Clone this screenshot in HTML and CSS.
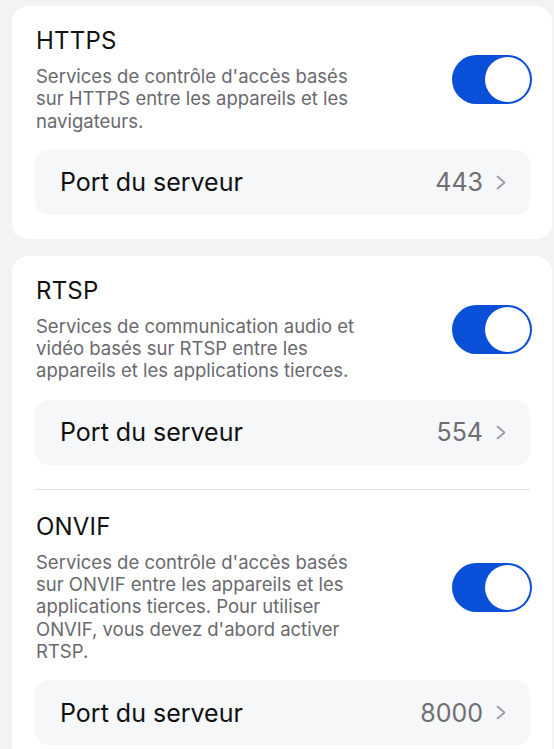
FILE: index.html
```html
<!DOCTYPE html>
<html lang="fr">
<head>
<meta charset="utf-8">
<title>Services</title>
<link rel="stylesheet" href="styles.css">
</head>
<body>
<div class="card">
  <section class="section">
    <div class="header">
      <div class="info">
        <h2 class="title">HTTPS</h2>
        <p class="desc">Services de contrôle d'accès basés sur HTTPS entre les appareils et les navigateurs.</p>
      </div>
      <div class="toggle"><span class="knob"></span></div>
    </div>
    <div class="row">
      <span class="row-label">Port du serveur</span>
      <span class="row-value">443<svg class="chev" width="10" height="15" viewBox="0 0 10 15"><polyline points="1.5,1.5 8.5,7.5 1.5,13.5" fill="none" stroke="#9b9ba0" stroke-width="1.8" stroke-linecap="round" stroke-linejoin="round"/></svg></span>
    </div>
  </section>
</div>
<div class="card">
  <section class="section">
    <div class="header">
      <div class="info">
        <h2 class="title">RTSP</h2>
        <p class="desc">Services de communication audio et vidéo basés sur RTSP entre les appareils et les applications tierces.</p>
      </div>
      <div class="toggle"><span class="knob"></span></div>
    </div>
    <div class="row">
      <span class="row-label">Port du serveur</span>
      <span class="row-value">554<svg class="chev" width="10" height="15" viewBox="0 0 10 15"><polyline points="1.5,1.5 8.5,7.5 1.5,13.5" fill="none" stroke="#9b9ba0" stroke-width="1.8" stroke-linecap="round" stroke-linejoin="round"/></svg></span>
    </div>
  </section>
  <section class="section">
    <div class="header">
      <div class="info">
        <h2 class="title">ONVIF</h2>
        <p class="desc">Services de contrôle d'accès basés sur ONVIF entre les appareils et les applications tierces. Pour utiliser ONVIF, vous devez d'abord activer RTSP.</p>
      </div>
      <div class="toggle"><span class="knob"></span></div>
    </div>
    <div class="row">
      <span class="row-label">Port du serveur</span>
      <span class="row-value">8000<svg class="chev" width="10" height="15" viewBox="0 0 10 15"><polyline points="1.5,1.5 8.5,7.5 1.5,13.5" fill="none" stroke="#9b9ba0" stroke-width="1.8" stroke-linecap="round" stroke-linejoin="round"/></svg></span>
    </div>
  </section>
</div>
</body>
</html>
```
FILE: styles.css
```css
html, body {
  margin: 0;
}
body {
  background: #f2f3f5;
  font-family: Inter, "Noto Sans", sans-serif;
  padding: 6px 0 0 12px;
  overflow: hidden;
}
.card {
  width: 540px;
  box-sizing: border-box;
  background: #ffffff;
  border-radius: 16px;
  padding: 0 22px 0 23px;
  margin-bottom: 17px;
}
.section {
  padding: 21px 0 24px;
}
.section + .section {
  border-top: 1px solid #e3e3e6;
  padding-top: 23px;
}
.header {
  display: flex;
  align-items: center;
  justify-content: space-between;
  padding-left: 1px;
}
.title {
  margin: 0;
  font-size: 24px;
  font-weight: 400;
  line-height: 28px;
  letter-spacing: 0.2px;
  color: #111111;
}
.desc {
  margin: 10px 0 0;
  font-size: 18.5px;
  line-height: 22.3px;
  color: #69696e;
  max-width: 336px;
}
.toggle {
  flex: none;
  width: 80px;
  height: 49px;
  box-sizing: border-box;
  border-radius: 25px;
  background: #0a4fd8;
  display: flex;
  justify-content: flex-end;
  align-items: center;
  padding: 2px;
  margin-right: -2px;
}
.knob {
  width: 45px;
  height: 45px;
  border-radius: 50%;
  background: #ffffff;
}
.row {
  margin-top: 18px;
  height: 65px;
  box-sizing: border-box;
  background: #f6f7f8;
  border-radius: 14px;
  display: flex;
  align-items: center;
  justify-content: space-between;
  padding: 0 24px 0 25px;
}
.row-label {
  font-size: 25px;
  color: #111111;
}
.row-value {
  font-size: 25px;
  color: #6e6e73;
  display: flex;
  align-items: center;
  gap: 13px;
}
.chev {
  display: block;
}
```
